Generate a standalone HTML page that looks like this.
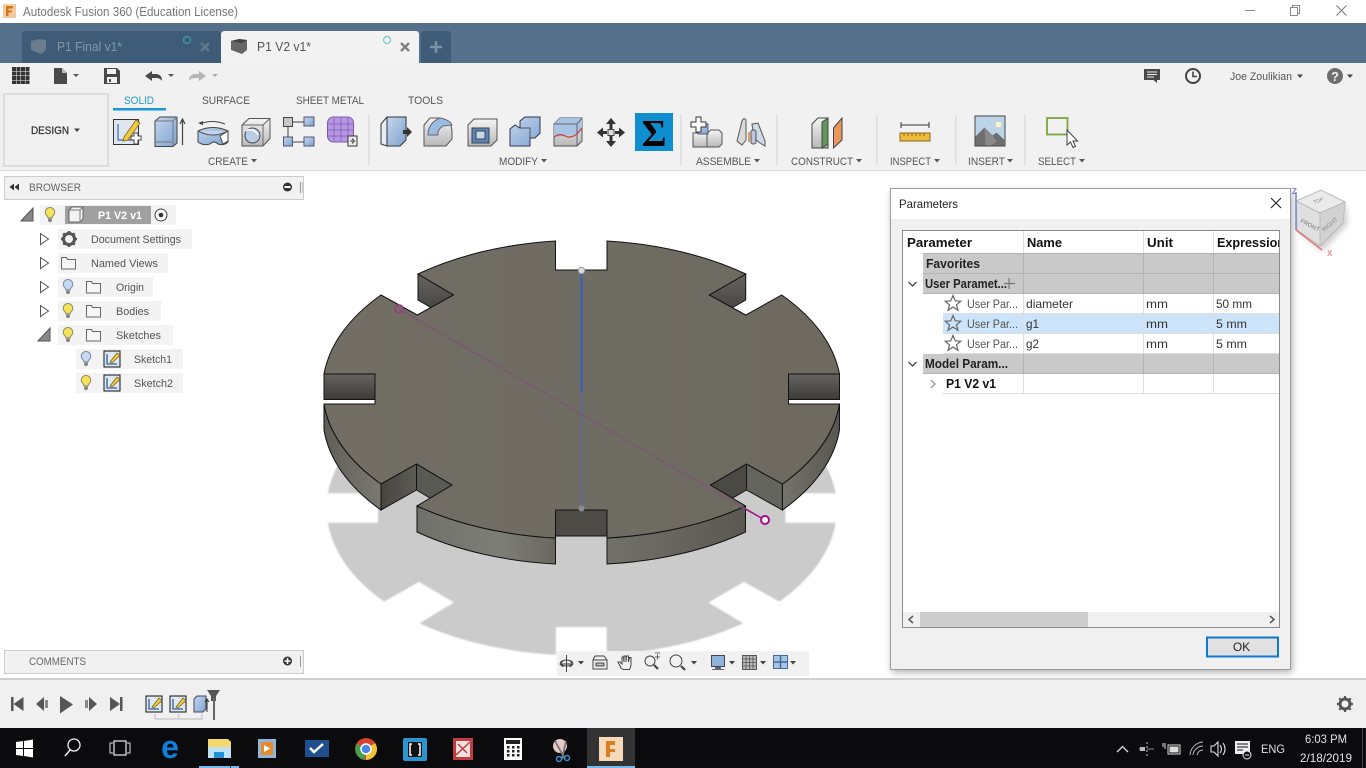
<!DOCTYPE html>
<html><head><meta charset="utf-8"><title>Autodesk Fusion 360</title>
<style>html,body{margin:0;padding:0;background:#fff;overflow:hidden}svg{display:block}text{font-family:"Liberation Sans",sans-serif;fill:#555}</style>
</head><body>
<svg width="1366" height="768" viewBox="0 0 1366 768" xmlns="http://www.w3.org/2000/svg">
<defs>
<filter id="b1" x="-5%" y="-5%" width="110%" height="110%"><feGaussianBlur stdDeviation="0.8"/></filter>
<filter id="b2" x="-10%" y="-10%" width="120%" height="120%"><feGaussianBlur stdDeviation="4"/></filter>
<filter id="b3" x="-30%" y="-30%" width="160%" height="160%"><feGaussianBlur stdDeviation="3"/></filter>
<linearGradient id="gFace" x1="0" y1="0" x2="1" y2="0"><stop offset="0" stop-color="#726e65"/><stop offset=".5" stop-color="#6f6c63"/><stop offset="1" stop-color="#6e6a60"/></linearGradient>
<linearGradient id="gNotch" x1="0" y1="0" x2="0" y2="1"><stop offset="0" stop-color="#66645f"/><stop offset="1" stop-color="#3c3b39"/></linearGradient>
<linearGradient id="gL" x1="0" y1="0" x2="1" y2="0"><stop offset="0" stop-color="#5e5d57"/><stop offset="1" stop-color="#7a7a72"/></linearGradient>
<linearGradient id="gBL" x1="0" y1="0" x2="1" y2="0"><stop offset="0" stop-color="#70716a"/><stop offset=".6" stop-color="#7d7e77"/><stop offset="1" stop-color="#68685f"/></linearGradient>
<linearGradient id="gBR" x1="0" y1="0" x2="1" y2="0"><stop offset="0" stop-color="#72716a"/><stop offset="1" stop-color="#5a5851"/></linearGradient>
<linearGradient id="gR" x1="0" y1="0" x2="1" y2="0"><stop offset="0" stop-color="#74746d"/><stop offset="1" stop-color="#57564f"/></linearGradient>
<linearGradient id="gW" x1="0" y1="0" x2="1" y2="0"><stop offset="0" stop-color="#47453f"/><stop offset="1" stop-color="#5c5b55"/></linearGradient>
<linearGradient id="blue" x1="0" y1="0" x2="1" y2="1"><stop offset="0" stop-color="#c4d6ec"/><stop offset="1" stop-color="#7fa3d0"/></linearGradient>
<linearGradient id="grey" x1="0" y1="0" x2="0" y2="1"><stop offset="0" stop-color="#f4f4f4"/><stop offset="1" stop-color="#b8b8b8"/></linearGradient>
<path id="disc" d="M555.5 241L555.5 270L607 270L607 241A259 149.5 0 0 1 745.7 274L709.3 295L745.7 315L781.7 295A259 149.5 0 0 1 839.5 374L788.5 374L788.5 404L839.5 404A259 149.5 0 0 1 782.4 484L746.5 464L710.4 485L745.5 506A259 149.5 0 0 1 607 538L607 510L555.5 510L555.5 538A259 149.5 0 0 1 417 506L452 485L416.5 464L381 484A259 149.5 0 0 1 324 404L375 404L375 374L324 374A259 149.5 0 0 1 381 295L417.3 315L453.5 295L418 274A259 149.5 0 0 1 555.5 241Z"/>
<g id="bulbY"><path d="M0 -7.5a4.7 4.7 0 0 1 3 8.3q-.8 .8 -.8 2h-4.4q0 -1.2 -.8 -2a4.7 4.7 0 0 1 3 -8.3z" fill="#f7e35a" stroke="#8a8a6a"/><path d="M-2 3.5h4v2.5l-1 1h-2l-1 -1z" fill="#888"/></g>
<g id="bulbB"><path d="M0 -7.5a4.7 4.7 0 0 1 3 8.3q-.8 .8 -.8 2h-4.4q0 -1.2 -.8 -2a4.7 4.7 0 0 1 3 -8.3z" fill="#c5d9f3" stroke="#7a8aa0"/><path d="M-2 3.5h4v2.5l-1 1h-2l-1 -1z" fill="#888"/></g>
<path id="folder" d="M.5 1.5h5l1 2h8v9.5h-14z" fill="#f6f6f6" stroke="#666"/>
<g id="sk"><rect x="0" y="0" width="16" height="16" fill="#dfe8f3" stroke="#111"/><path d="M3 3v10h10" fill="none" stroke="#2b5d9b" stroke-width="1.3"/><path d="M6 11L13 2l3 2.5L8 12z" fill="#f0c93a" stroke="#6b5b1a" stroke-width=".7"/></g>
<path id="star" d="M8 .5l2.2 5.3 5.6 .4 -4.3 3.6 1.4 5.5L8 12l-4.9 3.3 1.4 -5.5L.2 6.2l5.6 -.4z" fill="none" stroke="#666" stroke-width="1.2"/>
</defs>

<!-- title bar -->
<rect width="1366" height="23" fill="#fff"/>
<rect x="3" y="4" width="13" height="14" fill="#f3c9a0"/><path d="M6 6h7v2.500H8.500v2H12v2H8.500V16H6z" fill="#d4761d"/>
<text x="23" y="16" font-size="12.500" textLength="215" lengthAdjust="spacingAndGlyphs" style="fill:#777">Autodesk Fusion 360 (Education License)</text>
<path d="M1245 10.500h10" stroke="#888"/><path d="M1290.500 7.500h7v8h-7zM1292.500 7.500v-2h7v8h-2" fill="none" stroke="#888"/><path d="M1336.500 5.500l10 10M1346.500 5.500l-10 10" stroke="#777"/>

<!-- tab bar -->
<rect y="23" width="1366" height="40" fill="#54708a"/>
<path d="M22 63V35q0-4 4-4h191q4 0 4 4v28z" fill="#3e5c78"/>
<path d="M221 63V35q0-4 4-4h191q3 0 3 4v28z" fill="#f2f2f2"/>
<path d="M421 63V35q0-4 4-4h23q3 0 3 4v28z" fill="#3e5c78"/>
<path d="M31 41l8-2 7 1v10l-5 4-10-4z" fill="#6a7c8d"/><path d="M231 41l8-2 8 1v10l-5 4-11-4z" fill="#666"/><path d="M231 41l8-2 8 1-5 3z" fill="#3f3f3f"/>
<text x="57" y="51" font-size="12.500" textLength="65" lengthAdjust="spacingAndGlyphs" style="fill:#8497a9">P1 Final v1*</text>
<text x="257" y="51" font-size="12.500" font-weight="normal" textLength="54" lengthAdjust="spacingAndGlyphs" style="fill:#555">P1 V2 v1*</text>
<circle cx="187" cy="40" r="3.500" fill="none" stroke="#3b9c9a" stroke-width="1.300"/><circle cx="387" cy="40" r="3.500" fill="none" stroke="#7cc9c0" stroke-width="1.300"/>
<path d="M201 43l8 8M209 43l-8 8" stroke="#637990" stroke-width="2.400"/><path d="M401 43l8 8M409 43l-8 8" stroke="#808080" stroke-width="2.400"/>
<path d="M430 47h12M436 41v12" stroke="#7b93a9" stroke-width="2.400"/>

<!-- toolbar -->
<rect y="63" width="1366" height="107" fill="#f1f1f1"/><rect y="170" width="1366" height="1" fill="#ddd"/>
<g fill="#333"><rect x="12" y="67" width="4" height="4"/><rect x="16.500" y="67" width="4" height="4"/><rect x="21" y="67" width="4" height="4"/><rect x="25.500" y="67" width="4" height="4"/><rect x="12" y="71.500" width="4" height="4"/><rect x="16.500" y="71.500" width="4" height="4"/><rect x="21" y="71.500" width="4" height="4"/><rect x="25.500" y="71.500" width="4" height="4"/><rect x="12" y="76" width="4" height="4"/><rect x="16.500" y="76" width="4" height="4"/><rect x="21" y="76" width="4" height="4"/><rect x="25.500" y="76" width="4" height="4"/><rect x="12" y="80.500" width="4" height="3.500"/><rect x="16.500" y="80.500" width="4" height="3.500"/><rect x="21" y="80.500" width="4" height="3.500"/><rect x="25.500" y="80.500" width="4" height="3.500"/></g>
<path d="M54 68h8l5 5v11H54z" fill="#4a4a4a"/><path d="M62 68v5h5z" fill="#bbb"/><path d="M73 74h6l-3 3z" fill="#555"/>
<path d="M104 68h13l3 3v13h-16z" fill="#484848"/><rect x="107" y="69" width="9" height="5" fill="#f1f1f1"/><rect x="107" y="77" width="10" height="6" fill="#f1f1f1"/><rect x="109" y="79" width="2" height="3" fill="#484848"/>
<path d="M145 76l7-5v3h5q5 1 5 7-2-3-5-3h-5v3z" fill="#484848"/><path d="M168 74h6l-3 3z" fill="#555"/>
<path d="M206 76l-7-5v3h-5q-5 1-5 7 2-3 5-3h5v3z" fill="#b5b5b5"/><path d="M212 74h6l-3 3z" fill="#aaa"/>

<rect x="4" y="94" width="104" height="72" fill="#f1f1f1" stroke="#dcdcdc" stroke-width="2"/>
<text x="31" y="134" font-size="11" font-weight="normal" textLength="38" lengthAdjust="spacingAndGlyphs" style="fill:#333;stroke:#333;stroke-width:.25">DESIGN</text><path d="M74 128.500h6l-3 3.500z" fill="#444"/>
<text x="124" y="104" font-size="11" textLength="30" lengthAdjust="spacingAndGlyphs" style="fill:#1f9ad6">SOLID</text><rect x="113" y="108" width="53" height="2.500" fill="#1a97d5"/>
<text x="202" y="104" font-size="11" textLength="48" lengthAdjust="spacingAndGlyphs" style="fill:#555">SURFACE</text>
<text x="296" y="104" font-size="11" textLength="68" lengthAdjust="spacingAndGlyphs" style="fill:#555">SHEET METAL</text>
<text x="408" y="104" font-size="11" textLength="35" lengthAdjust="spacingAndGlyphs" style="fill:#555">TOOLS</text>

<!-- create icons -->
<rect x="113.500" y="119.500" width="25" height="25" fill="#dfe6ef" stroke="#333"/><path d="M118 124v16h16" fill="none" stroke="#3c6cab" stroke-width="1.200"/><path d="M124 137l12-17 4 3-12 17-5 1z" fill="#f2c83e" stroke="#7d6a20" stroke-width=".8"/><path d="M131 136h3v-3h4v3h3v4h-3v4h-4v-4h-3z" fill="#fff" stroke="#444"/>
<path d="M155 121l5-4h17v26l-4 3.500h-18z" fill="url(#blue)" stroke="#444"/><path d="M155 121h18v25.500M173 121l4-4M155 142h18" fill="none" stroke="#777"/><path d="M182.500 145v-25M180 124l2.500-5 2.500 5" fill="none" stroke="#444" stroke-width="1.200"/>
<path d="M198 131q15-7 30 0v11q-4 4-10 2q-4-4-8 0q-7 2-12-2z" fill="url(#blue)" stroke="#444"/><path d="M198 131q15 8 30 0" fill="#c3d6ec" stroke="#555"/><path d="M220 136l8-5v10l-5 3z" fill="#fff" stroke="#444"/><path d="M200 124q12-5 25 0" fill="none" stroke="#444"/><path d="M198 123l5-2v4z" fill="#444"/>
<path d="M242 125l7-6.500h21v20l-7 7.500h-21z" fill="url(#grey)" stroke="#555"/><path d="M242 125h21v21M263 125l7-6.500" fill="none" stroke="#666"/><circle cx="252.500" cy="135.500" r="7.500" fill="#b9cde6" stroke="#445"/><path d="M246 131q7-4 12 4" fill="none" stroke="#fff" stroke-width="1.500"/>
<rect x="283.500" y="117.500" width="9" height="9" fill="#c8c8c8" stroke="#444"/><rect x="304" y="117" width="10" height="9" fill="url(#blue)" stroke="#557"/><rect x="283.500" y="137" width="9" height="9" fill="url(#blue)" stroke="#557"/><rect x="304" y="137" width="10" height="9" fill="url(#blue)" stroke="#557"/><path d="M288 127v10M293 122h11M293 142h11" stroke="#444" fill="none"/>
<rect x="327.500" y="117" width="26" height="25" rx="6" fill="#b896e6" stroke="#7a5aa8"/><path d="M334 118v23M341 118v23M348 118v23M328 124h25M328 130h25M328 136h25" stroke="#7d5fb0" fill="none" stroke-width=".8"/><rect x="348" y="136" width="9" height="10" fill="#eee" stroke="#333"/><path d="M350 141h3M352 138.500l2.500 2.500-2.500 2.500" stroke="#333" fill="none"/>
<text x="208" y="165" font-size="11" textLength="40" lengthAdjust="spacingAndGlyphs" style="fill:#555">CREATE</text><path d="M251 159h6l-3 3.500z" fill="#555"/>
<rect x="368" y="115" width="1.500" height="50" fill="#ddd"/>

<!-- modify icons -->
<path d="M381 124l6-7h5v29h-5l-6-2z" fill="#e6edf5" stroke="#333"/><path d="M387 117h19v23l-6 6h-13z" fill="url(#blue)" stroke="#333"/><path d="M403 130h4v-3l5 5-5 5v-3h-4z" fill="#333"/>
<path d="M424 125l6-7h10q12 2 12 14v7l-6 7h-22z" fill="url(#grey)" stroke="#555"/><path d="M440 118q-12 5-12 17h10q-1-5 5-9l9-1q-2-5-12-7z" fill="#9cbce2" stroke="#667"/>
<path d="M468 125l6-6h23v21l-6 6h-23z" fill="url(#grey)" stroke="#555"/><rect x="472" y="128" width="17" height="15" fill="#5f84b3" stroke="#345"/><rect x="476" y="131" width="9" height="8" fill="#c9d8e8" stroke="#345"/>
<path d="M520 128v-7l5-4h15v16l-5 5h-5v8h-20v-17l5-4z" fill="url(#blue)" stroke="#335"/><path d="M520 128h10v10" fill="none" stroke="#556"/>
<path d="M554 124l6-6h22v23l-5 5h-23z" fill="url(#grey)" stroke="#555"/><path d="M554 124l6-6h22v10l-5 6-12 2-11 1z" fill="#a9c3e3"/><path d="M554 124h23v22M577 124l5-6" fill="none" stroke="#667"/><path d="M554 137q6-4 11-1t12-2l5-6" fill="none" stroke="#c4403a" stroke-width="1.300"/>
<path d="M611 118l5 6h-3.500v5h-3v-5H606zM611 147l5-6h-3.500v-5h-3v5H606zM597 132.500l6-5v3.500h4v3h-4v3.500zM625 132.500l-6-5v3.500h-4v3h4v3.500z" fill="#333"/><rect x="608" y="129.500" width="6" height="6" fill="#ddd" stroke="#444"/>
<rect x="635" y="113" width="38" height="38" fill="#0f8fd0"/><text x="654" y="146" font-size="38" text-anchor="middle" style="fill:#000;font-family:'Liberation Serif',serif;font-weight:bold">Σ</text>
<text x="499" y="165" font-size="11" textLength="39" lengthAdjust="spacingAndGlyphs" style="fill:#555">MODIFY</text><path d="M541 159h6l-3 3.500z" fill="#555"/>
<rect x="680" y="115" width="1.500" height="50" fill="#ddd"/>
<!-- assemble -->
<rect x="693" y="133" width="14" height="14" fill="url(#grey)" stroke="#555"/><path d="M707 133l4-3h8l3 3v11l-3 3h-12z" fill="url(#grey)" stroke="#555"/><rect x="698" y="124" width="10" height="10" fill="url(#blue)" stroke="#557"/><path d="M696 117h5v5h5v5h-5v5h-5v-5h-5v-5h5z" fill="#fff" stroke="#333"/>
<path d="M737 141l5-20q2-4 4-1v20l-4 5z" fill="#d9d9d9" stroke="#555"/><path d="M752 124l6-1 7 18v5l-5-3-6-5z" fill="#cfdbe9" stroke="#555"/><path d="M749 132v10" stroke="#d47a3a" stroke-width="1.500"/><rect x="751" y="130" width="5" height="14" rx="2" fill="#b9c8da" stroke="#555"/>
<rect x="776" y="115" width="1.500" height="50" fill="#ddd"/>
<!-- construct -->
<path d="M812 124l6-6h10v30h-16z" fill="url(#grey)" stroke="#444"/><path d="M822 122l6-4v26l-6 4z" fill="#5e9a58" stroke="#444"/><path d="M833.500 128l8.500-10v22l-8.500 8z" fill="#ea9559" stroke="#444"/>
<text x="791" y="165" font-size="11" textLength="62" lengthAdjust="spacingAndGlyphs" style="fill:#555">CONSTRUCT</text><path d="M856 159h6l-3 3.500z" fill="#555"/>
<text x="696" y="165" font-size="11" textLength="55" lengthAdjust="spacingAndGlyphs" style="fill:#555">ASSEMBLE</text><path d="M754 159h6l-3 3.500z" fill="#555"/>
<rect x="876" y="115" width="1.500" height="50" fill="#ddd"/>
<!-- inspect -->
<path d="M901 125h28M901 122v6M929 122v6" stroke="#333" fill="none"/><rect x="900" y="133" width="30" height="8" fill="#eebb3a" stroke="#8a6a18"/><path d="M904 133v3M908 133v3M912 133v3M916 133v3M920 133v3M924 133v3" stroke="#8a6a18"/>
<text x="890" y="165" font-size="11" textLength="41" lengthAdjust="spacingAndGlyphs" style="fill:#555">INSPECT</text><path d="M934 159h6l-3 3.500z" fill="#555"/>
<rect x="955" y="115" width="1.500" height="50" fill="#ddd"/>
<!-- insert -->
<rect x="975" y="116" width="30" height="30" fill="#bcd3e8" stroke="#444"/><rect x="996" y="122" width="5" height="5" fill="#fff3c0"/><path d="M975.500 145.500v-9l9-9 8 8 4-3 8.500 8v5z" fill="#6f6f6f"/><path d="M984.500 127.500l8 8 4 6-5 4h-6z" fill="#8a8a8a"/>
<text x="968" y="165" font-size="11" textLength="37" lengthAdjust="spacingAndGlyphs" style="fill:#555">INSERT</text><path d="M1007 159h6l-3 3.500z" fill="#555"/>
<rect x="1024" y="115" width="1.500" height="50" fill="#ddd"/>
<!-- select -->
<rect x="1047" y="118" width="20.500" height="16.500" fill="none" stroke="#7ca63e" stroke-width="1.800"/><path d="M1067 130v15l3.500-3 2.500 5.500 2.500-1-2.500-5.500h4.500z" fill="#fff" stroke="#444"/>
<text x="1038" y="165" font-size="11" textLength="38" lengthAdjust="spacingAndGlyphs" style="fill:#555">SELECT</text><path d="M1079 159h6l-3 3.500z" fill="#555"/>

<!-- top right -->
<path d="M1144 69h16v11h-3v3l-3.500-3H1144z" fill="#484848"/><path d="M1147 72h10M1147 74.500h10M1147 77h7" stroke="#f1f1f1"/>
<circle cx="1193" cy="76" r="7" fill="none" stroke="#444" stroke-width="2"/><path d="M1193 71.500v5h4" fill="none" stroke="#444" stroke-width="1.600"/>
<text x="1230" y="80" font-size="11" textLength="62" lengthAdjust="spacingAndGlyphs" style="fill:#555">Joe Zoulikian</text><path d="M1297 74.500h6l-3 3.500z" fill="#444"/>
<circle cx="1335" cy="76" r="8" fill="#6e6e6e"/><text x="1335" y="81" font-size="13" font-weight="bold" text-anchor="middle" style="fill:#f1f1f1">?</text><path d="M1347 74.500h6l-3 3.500z" fill="#444"/>

<!-- viewport -->
<rect y="171" width="1366" height="507" fill="#fff"/>
<g filter="url(#b1)"><use href="#disc" fill="#cbcbcb" transform="translate(581.500 508) scale(.985) translate(-581.500 -389)"/></g>
<!-- walls -->
<path d="M839.500 404A259 149.500 0 0 1 782.400 484L782.400 510A259 149.500 0 0 0 839.500 430Z" fill="url(#gR)" stroke="#111"/>
<path d="M745.500 506A259 149.500 0 0 1 607 538L607 564A259 149.500 0 0 0 745.500 532Z" fill="url(#gBR)" stroke="#111"/>
<path d="M555.500 538A259 149.500 0 0 1 417 506L417 532A259 149.500 0 0 0 555.500 564Z" fill="url(#gBL)" stroke="#111"/>
<path d="M381 484A259 149.500 0 0 1 324 404L324 430A259 149.500 0 0 0 381 510Z" fill="url(#gL)" stroke="#111"/>
<path d="M381 484L416.500 464V490L381 510Z" fill="url(#gW)" stroke="#111"/>
<path d="M416.500 464L452 485V511L416.500 490Z" fill="#5a5a55" stroke="#111"/>
<path d="M746.500 464L782.400 484V510L746.500 490Z" fill="#64645e" stroke="#111"/>
<path d="M710.400 485L746.500 464V490L710.400 511Z" fill="#4b4944" stroke="#111"/>
<path d="M418 274L453.500 295V321L418 300Z" fill="url(#gNotch)" stroke="#111"/>
<path d="M745.700 274L709.300 295V321L745.700 300Z" fill="url(#gNotch)" stroke="#111"/>
<rect x="324" y="374" width="51" height="25.500" fill="url(#gNotch)" stroke="#111"/>
<rect x="788.500" y="374" width="51" height="25.500" fill="url(#gNotch)" stroke="#111"/>
<rect x="555.500" y="510" width="51.500" height="26" fill="#4c4b46" stroke="#111"/>
<use href="#disc" fill="url(#gFace)" stroke="#111" stroke-width="1"/>
<!-- sketch lines -->
<path d="M581.500 271V392" stroke="#2b5fd0" stroke-width="1.700"/><path d="M581.500 392V508" stroke="#56689c" stroke-width="1.500"/>
<circle cx="581.500" cy="270.500" r="3.200" fill="#ddd" stroke="#999"/><circle cx="581.500" cy="508.500" r="3" fill="#8d8d90"/>
<path d="M399 309L745.500 509" stroke="#7d5675" stroke-width="1.300"/><path d="M745.500 509L765 520" stroke="#9b1882" stroke-width="1.600"/>
<circle cx="399" cy="309" r="4" fill="none" stroke="#93407f" stroke-width="1.800"/>
<circle cx="765" cy="520" r="4" fill="#fff" stroke="#a5108a" stroke-width="2"/>

<!-- browser panel -->
<rect x="4.500" y="176.500" width="299" height="23" fill="#f1f1f1" stroke="#ccc"/>
<path d="M9.500 187l4.500-3.500v7zM14.500 187l4.500-3.500v7z" fill="#333"/>
<text x="29" y="191" font-size="11" textLength="52" lengthAdjust="spacingAndGlyphs" style="fill:#666">BROWSER</text>
<circle cx="287.500" cy="187" r="4.500" fill="#333"/><rect x="284.500" y="186" width="6" height="2" fill="#fff"/><path d="M300.500 182v11" stroke="#999"/><path d="M302.500 182v11" stroke="#ccc"/>

<g fill="#f3f3f3"><rect x="40" y="205" width="136" height="20"/><rect x="58" y="229" width="134" height="20"/><rect x="58" y="253" width="110" height="20"/><rect x="58" y="277" width="95" height="20"/><rect x="58" y="301" width="103" height="20"/><rect x="58" y="325" width="115" height="20"/><rect x="76" y="349" width="107" height="20"/><rect x="76" y="373" width="107" height="20"/></g>
<path d="M21 221l12-13v13z" fill="#888" stroke="#555"/>
<use href="#bulbY" x="50" y="215"/>
<rect x="65" y="206" width="86" height="18" fill="#a0a0a0"/><path d="M69 210l3-3h11v12l-3 3H69z" fill="#f3f3f3" stroke="#666"/><path d="M69 210h11v12M80 210l3-3" fill="none" stroke="#777"/>
<text x="98" y="219" font-size="11" font-weight="bold" textLength="44" lengthAdjust="spacingAndGlyphs" style="fill:#fff">P1 V2 v1</text>
<circle cx="161" cy="215" r="6" fill="#fff" stroke="#444"/><circle cx="161" cy="215" r="2.300" fill="#333"/>
<path d="M40.500 233.500l8 5.500-8 5.500z" fill="#fff" stroke="#555"/>
<g transform="translate(69 239)"><circle r="5.500" fill="none" stroke="#555" stroke-width="3"/><path d="M0-8v3M0 5v3M-8 0h3M5 0h3M-5.700-5.700l2 2M3.700 3.700l2 2M5.700-5.700l-2 2M-3.700 3.700l-2 2" stroke="#555" stroke-width="2.400"/></g>
<text x="91" y="243" font-size="11" textLength="90" lengthAdjust="spacingAndGlyphs">Document Settings</text>
<path d="M40.500 257.500l8 5.500-8 5.500z" fill="#fff" stroke="#555"/><use href="#folder" x="61" y="256"/>
<text x="91" y="267" font-size="11" textLength="67" lengthAdjust="spacingAndGlyphs">Named Views</text>
<path d="M40.500 281.500l8 5.500-8 5.500z" fill="#fff" stroke="#555"/><use href="#bulbB" x="68" y="287"/><use href="#folder" x="86" y="280"/>
<text x="116" y="291" font-size="11" textLength="28" lengthAdjust="spacingAndGlyphs">Origin</text>
<path d="M40.500 305.500l8 5.500-8 5.500z" fill="#fff" stroke="#555"/><use href="#bulbY" x="68" y="311"/><use href="#folder" x="86" y="304"/>
<text x="116" y="315" font-size="11" textLength="33" lengthAdjust="spacingAndGlyphs">Bodies</text>
<path d="M38 341l12-13v13z" fill="#888" stroke="#555"/><use href="#bulbY" x="68" y="335"/><use href="#folder" x="86" y="328"/>
<text x="116" y="339" font-size="11" textLength="45" lengthAdjust="spacingAndGlyphs">Sketches</text>
<use href="#bulbB" x="86" y="359"/><use href="#sk" x="104" y="351"/>
<text x="134" y="363" font-size="11" textLength="38" lengthAdjust="spacingAndGlyphs">Sketch1</text>
<use href="#bulbY" x="86" y="383"/><use href="#sk" x="104" y="375"/>
<text x="134" y="387" font-size="11" textLength="39" lengthAdjust="spacingAndGlyphs">Sketch2</text>

<!-- comments -->
<rect x="4.500" y="650.500" width="299" height="23" fill="#f1f1f1" stroke="#ccc"/>
<text x="29" y="665" font-size="11" textLength="57" lengthAdjust="spacingAndGlyphs" style="fill:#666">COMMENTS</text>
<circle cx="287.500" cy="661" r="4.500" fill="#333"/><path d="M284.500 661h6M287.500 658v6" stroke="#fff" stroke-width="1.600"/><path d="M300.500 656v11" stroke="#999"/>

<!-- nav bar -->
<rect x="557" y="651" width="252" height="25" fill="#f1f1f1"/>
<g fill="none" stroke="#444">
<path d="M566.500 655v17M560 664h13M563 661l-3 3 3 3M570 661l3 3-3 3"/><ellipse cx="566.500" cy="663" rx="6" ry="3"/>
<rect x="593" y="660" width="14" height="9"/><path d="M593 660l2-4 9 0 3 4"/><rect x="596" y="663" width="8" height="3" fill="#bbb"/>
<path d="M621 668l-3-6 2 0 2 2v-7l1.500 0 .5 5v-6h2v6l.5-6h2v6l1-4.500h1.500v8l-1.500 4h-6z"/>
<circle cx="650" cy="661" r="5"/><path d="M654 665l4 4" stroke-width="2.200"/><path d="M655 657h5M657.500 654.500v5M655 653h5" stroke-width=".8"/>
<circle cx="676" cy="661" r="6"/><path d="M681 666l4 4" stroke-width="2.200"/>
</g>
<path d="M578 661h6l-3 3.500zM691 661h6l-3 3.500zM729 661h6l-3 3.500zM760 661h6l-3 3.500zM790 661h6l-3 3.500z" fill="#444"/>
<rect x="711.500" y="655.500" width="13" height="11" fill="#8fb4dc" stroke="#445"/><path d="M715 667h6v2h3v1h-12v-1h3z" fill="#666"/>
<rect x="742.500" y="655.500" width="14" height="14" fill="#bbb" stroke="#555"/><path d="M746 656v13M749.500 656v13M753 656v13M743 659h13M743 662.500h13M743 666h13" stroke="#555" stroke-width=".8"/>
<rect x="773.500" y="655.500" width="14" height="13" fill="#a9c4e4" stroke="#3f6a9c"/><path d="M780.500 656v12M774 662h13" stroke="#3f6a9c" stroke-width="1.500"/>

<!-- dialog -->
<rect x="892" y="192" width="400" height="480" fill="#000" opacity=".35" filter="url(#b2)"/>
<rect x="890.500" y="188.500" width="400" height="481" fill="#f0f0f0" stroke="#9c9c9c"/>
<rect x="891" y="189" width="399" height="30" fill="#fff"/>
<text x="899" y="208" font-size="12" textLength="59" lengthAdjust="spacingAndGlyphs" style="fill:#222">Parameters</text>
<path d="M1271 198l10 10M1281 198l-10 10" stroke="#222" stroke-width="1.100"/>
<rect x="902.500" y="230.500" width="377" height="397" fill="#fff" stroke="#8a8a8a"/>
<rect x="923" y="254" width="356" height="20" fill="#c9c9c9"/><rect x="923" y="274" width="356" height="20" fill="#c9c9c9"/>
<rect x="943" y="314" width="336" height="20" fill="#cce4fa"/>
<rect x="923" y="354" width="356" height="20" fill="#c9c9c9"/>
<g stroke="#dedede"><path d="M1023.500 231v22M1143.500 231v22M1213.500 231v22"/><path d="M1023.500 294v100M1143.500 294v100M1213.500 294v100"/><path d="M943 313.500h336M943 333.500h336M943 353.500h336M943 393.500h336"/></g>
<g stroke="#b4b4b4"><path d="M1023.500 254v40M1143.500 254v40M1213.500 254v40M1023.500 354v20M1143.500 354v20M1213.500 354v20M923 253.500h356M923 273.500h356M923 293.500h356M923 373.500h356"/></g>
<text x="907" y="247" font-size="13" font-weight="bold" textLength="65" lengthAdjust="spacingAndGlyphs" style="fill:#111">Parameter</text>
<text x="1027" y="247" font-size="13" font-weight="bold" textLength="35" lengthAdjust="spacingAndGlyphs" style="fill:#111">Name</text>
<text x="1147" y="247" font-size="13" font-weight="bold" textLength="26" lengthAdjust="spacingAndGlyphs" style="fill:#111">Unit</text>
<svg x="1213" y="231" width="66" height="22"><text x="4" y="16" font-size="13" font-weight="bold" textLength="68" lengthAdjust="spacingAndGlyphs" style="fill:#111">Expression</text></svg>
<text x="926" y="268" font-size="12.500" font-weight="bold" textLength="54" lengthAdjust="spacingAndGlyphs" style="fill:#222">Favorites</text>
<text x="925" y="288" font-size="12.500" font-weight="bold" textLength="82" lengthAdjust="spacingAndGlyphs" style="fill:#222">User Paramet...</text>
<text x="925" y="368" font-size="12.500" font-weight="bold" textLength="83" lengthAdjust="spacingAndGlyphs" style="fill:#222">Model Param...</text>
<text x="946" y="388" font-size="12.500" font-weight="bold" textLength="50" lengthAdjust="spacingAndGlyphs" style="fill:#111">P1 V2 v1</text>
<path d="M1009 278v11M1004 283.500h11" stroke="#777" stroke-width="1.200"/>
<path d="M908.500 282l4 4 4-4M908.500 362l4 4 4-4" fill="none" stroke="#444" stroke-width="1.300"/>
<path d="M931 380l4 4-4 4" fill="none" stroke="#999" stroke-width="1.300"/>
<use href="#star" x="945" y="295"/><use href="#star" x="945" y="315"/><use href="#star" x="945" y="335"/>
<g font-size="11.500">
<text x="967" y="308" textLength="51" lengthAdjust="spacingAndGlyphs">User Par...</text>
<text x="967" y="328" textLength="51" lengthAdjust="spacingAndGlyphs">User Par...</text>
<text x="967" y="348" textLength="51" lengthAdjust="spacingAndGlyphs">User Par...</text>
</g>
<g font-size="12">
<text x="1026" y="308" textLength="47" lengthAdjust="spacingAndGlyphs" style="fill:#333">diameter</text>
<text x="1026" y="328" textLength="13" lengthAdjust="spacingAndGlyphs" style="fill:#333">g1</text>
<text x="1026" y="348" textLength="13" lengthAdjust="spacingAndGlyphs" style="fill:#333">g2</text>
<text x="1146" y="308" textLength="22" lengthAdjust="spacingAndGlyphs" style="fill:#333">mm</text>
<text x="1146" y="328" textLength="22" lengthAdjust="spacingAndGlyphs" style="fill:#333">mm</text>
<text x="1146" y="348" textLength="22" lengthAdjust="spacingAndGlyphs" style="fill:#333">mm</text>
<text x="1216" y="308" textLength="36" lengthAdjust="spacingAndGlyphs" style="fill:#333">50 mm</text>
<text x="1216" y="328" textLength="31" lengthAdjust="spacingAndGlyphs" style="fill:#333">5 mm</text>
<text x="1216" y="348" textLength="31" lengthAdjust="spacingAndGlyphs" style="fill:#333">5 mm</text>
</g>
<rect x="903" y="612" width="376" height="15" fill="#f0f0f0"/><rect x="920" y="612" width="168" height="15" fill="#cdcdcd"/>
<path d="M913 616l-4 3.500 4 3.500M1270 616l4 3.500-4 3.500" fill="none" stroke="#555" stroke-width="1.500"/>
<rect x="1207" y="637.500" width="71" height="19" fill="#e1e1e1" stroke="#0f78cf" stroke-width="2"/>
<text x="1241.500" y="651" font-size="12" text-anchor="middle" style="fill:#222">OK</text>

<!-- view cube -->
<path d="M1300 232l22 20 26-28-2-20z" fill="#999" opacity=".45" filter="url(#b3)"/>
<path d="M1296 201l25-11 24 12-25 11z" fill="#eaeaea" stroke="#bbb"/><path d="M1296 201l24 12v33l-23-16z" fill="#e0e0e0" stroke="#bbb"/><path d="M1320 213l25-11-2 21-23 23z" fill="#d2d2d2" stroke="#bbb"/>
<path d="M1296 192v38" stroke="#7d83c8" stroke-width="1.500"/><path d="M1296 230l26 20" stroke="#e07a80" stroke-width="1.500"/>
<text x="1292" y="194" font-size="8" style="fill:#7d83c8;font-weight:bold">Z</text><text x="1327" y="256" font-size="8" style="fill:#e88d92;font-weight:bold">X</text>
<text font-size="6" transform="translate(1300 222) rotate(28)" style="fill:#777">FRONT</text><text font-size="6" transform="translate(1324 232) rotate(-40)" style="fill:#888">RIGHT</text><text font-size="5" transform="translate(1314 204) rotate(-20)" style="fill:#888">TOP</text>

<!-- timeline -->
<rect y="678" width="1366" height="2" fill="#cfcfcf"/><rect y="680" width="1366" height="48" fill="#f0f0f0"/>
<g fill="#555"><rect x="11" y="697" width="2.500" height="14"/><path d="M23.500 697v14l-10-7z"/><path d="M36 704l8-7v14z"/><rect x="45" y="700" width="3" height="8" fill="#888"/><path d="M60 696l13 8.500-13 9z"/><rect x="85" y="700" width="3" height="8" fill="#888"/><path d="M97 704l-8-7v14z"/><path d="M110 697v14l10-7z"/><rect x="120" y="697" width="2.500" height="14"/></g>
<use href="#sk" x="146" y="696"/><use href="#sk" x="170" y="696"/>
<path d="M194 699l3-3h9v13l-3 3h-9z" fill="url(#blue)" stroke="#446"/><path d="M207 712v-13M205 702l2-3 2 3" stroke="#333" fill="none"/>
<path d="M155 714v5h47v-5M178.500 714v5" fill="none" stroke="#ccc" stroke-width="1.500"/>
<path d="M207 690h13l-4 6v5h-5v-5z" fill="#555"/><rect x="213" y="698" width="2" height="22" fill="#666"/>
<g transform="translate(1345 704)"><circle r="5" fill="none" stroke="#555" stroke-width="3"/><path d="M0-8v3M0 5v3M-8 0h3M5 0h3M-5.700-5.700l2 2M3.700 3.700l2 2M5.700-5.700l-2 2M-3.700 3.700l-2 2" stroke="#555" stroke-width="2.200"/></g>

<!-- taskbar -->
<rect y="728" width="1366" height="40" fill="#0b0b0d"/>
<path d="M16 742l7-1v7h-7zM24 741l9-1.500V748h-9zM16 749h7v7l-7-1zM24 749h9v8.500l-9-1.500z" fill="#fff"/>
<circle cx="74" cy="745" r="6" fill="none" stroke="#eee" stroke-width="1.300"/><path d="M70 750l-5 6" stroke="#eee" stroke-width="1.500"/>
<rect x="114" y="741" width="12" height="14" fill="none" stroke="#eee" stroke-width="1.200"/><path d="M113 743h-3v10h3M127 743h3v10h-3" fill="none" stroke="#ddd"/>
<text x="170" y="758" font-size="32" font-weight="bold" text-anchor="middle" style="fill:#0f7fe0">e</text>
<path d="M208 739h20l3 3v16h-23z" fill="#f4d86c"/><rect x="208" y="747" width="23" height="11" fill="#bfe1f6"/><rect x="214" y="752" width="10" height="6" fill="#1f8fd8"/>
<rect x="258" y="739" width="18" height="19" fill="#8fb6d8"/><rect x="261" y="742" width="12" height="13" fill="#e68a2e"/><path d="M264 745l6 3.500-6 3.500z" fill="#fff"/>
<rect x="305" y="740" width="24" height="17" fill="#1f4f8f"/><path d="M310 748l4 4 9-8" fill="none" stroke="#fff" stroke-width="2.500"/>
<circle cx="366" cy="749" r="11" fill="#d8402f"/><path d="M366 749l-9.500-5.500-1 5.500a11 11 0 0 0 9 11z" fill="#3ea34a"/><path d="M366 749v11a11 11 0 0 0 11-11 11 11 0 0 0-2-6z" fill="#f1c232"/><circle cx="366" cy="749" r="5" fill="#4b87e5" stroke="#fff" stroke-width="1.500"/>
<rect x="403" y="738" width="24" height="23" rx="2" fill="#2a95d0"/><rect x="408" y="742" width="14" height="15" fill="#111"/><path d="M412 744h-2v11h2M418 744h2v11h-2" stroke="#fff" fill="none" stroke-width="1.500"/>
<rect x="453" y="738" width="20" height="22" fill="#c23b3f"/><rect x="456" y="741" width="14" height="16" fill="#f1e3e0"/><path d="M456 755l14-13M458 744l9 9" stroke="#c23b3f" stroke-width="1.500"/>
<rect x="504" y="738" width="18" height="22" fill="#fff"/><rect x="506" y="740" width="14" height="4" fill="#222"/><g fill="#222"><rect x="507" y="746" width="2.500" height="2.500"/><rect x="512" y="746" width="2.500" height="2.500"/><rect x="517" y="746" width="2.500" height="2.500"/><rect x="507" y="750" width="2.500" height="2.500"/><rect x="512" y="750" width="2.500" height="2.500"/><rect x="517" y="750" width="2.500" height="2.500"/><rect x="507" y="754" width="2.500" height="2.500"/><rect x="512" y="754" width="2.500" height="2.500"/><rect x="517" y="754" width="2.500" height="2.500"/></g>
<circle cx="560" cy="746" r="7" fill="#e7c8c8"/><path d="M555 741l10 18M566 741l-4 18" stroke="#777" stroke-width="1.800"/><circle cx="567" cy="758" r="2.500" fill="none" stroke="#3a8ed0" stroke-width="1.500"/><circle cx="559" cy="759" r="2.500" fill="none" stroke="#3a8ed0" stroke-width="1.500"/>
<rect x="587" y="728" width="48" height="40" fill="#333"/><rect x="587" y="766" width="48" height="2" fill="#76b9ed"/>
<rect x="599" y="737" width="24" height="24" fill="#f6d9b8"/><path d="M606 741h9v4h-5v4h5v3h-5v5h-4z" fill="#d97f22"/>
<rect x="199" y="766" width="40" height="2" fill="#76b9ed"/><rect x="230" y="766" width="1" height="2" fill="#222"/>
<path d="M1117 752l5.500-5.500 5.500 5.500" fill="none" stroke="#ddd" stroke-width="1.300"/>
<path d="M1139 749h4M1147 742v14" stroke="#bbb" stroke-dasharray="2 2"/><rect x="1140" y="747" width="5" height="4" fill="#bbb"/><path d="M1147 749h7" stroke="#888"/>
<rect x="1168" y="745" width="12" height="9" fill="none" stroke="#ddd"/><rect x="1169.500" y="746.500" width="9" height="6" fill="#ddd"/><path d="M1165 743v6M1163 743v4" stroke="#ddd"/>
<path d="M1190 755a14 14 0 0 1 13-13M1193 755a10 10 0 0 1 10-9M1197 755a6 6 0 0 1 6-5" fill="none" stroke="#bbb"/>
<path d="M1211 746h3l4-4v14l-4-4h-3zM1220 745q3 4 0 8M1223 743q4 6 0 12" fill="none" stroke="#ddd" stroke-width="1.100"/>
<path d="M1235 741h15v13h-15z" fill="#eee"/><path d="M1237 744h11M1237 747h11M1237 750h6" stroke="#111"/><circle cx="1247" cy="755" r="4" fill="#111" stroke="#eee"/><path d="M1245 755h4" stroke="#eee"/>
<text x="1261" y="753" font-size="12" textLength="24" lengthAdjust="spacingAndGlyphs" style="fill:#ddd">ENG</text>
<text x="1305" y="743" font-size="12" textLength="42" lengthAdjust="spacingAndGlyphs" style="fill:#e4e4e4">6:03 PM</text>
<text x="1300" y="762" font-size="12" textLength="52" lengthAdjust="spacingAndGlyphs" style="fill:#e4e4e4">2/18/2019</text>
<rect x="1362" y="728" width="1" height="40" fill="#444"/>
</svg>
</body></html>
